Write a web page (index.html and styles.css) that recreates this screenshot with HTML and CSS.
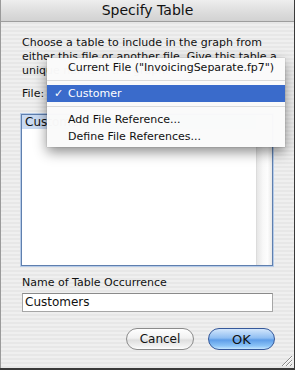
FILE: index.html
```html
<!DOCTYPE html>
<html lang="en">
<head>
  <meta charset="UTF-8">
  <title>Specify Table</title>
  <link rel="stylesheet" href="styles.css">
</head>
<body>
  <div class="window">
    <div class="titlebar">Specify Table</div>
    <div class="content">
      <p class="intro">Choose a table to include in the graph from<br>either this file or another file. Give this table a<br>unique name in the graph.</p>
      <div class="file-row">
        <span class="file-label">File:</span>
        <div class="popup"></div>
      </div>
      <div class="list">
        <div class="list-rows">
          <div class="row selected">Customers</div>
        </div>
        <div class="scroll-track"></div>
      </div>
      <div class="field-label">Name of Table Occurrence</div>
      <div class="field">Customers</div>
      <div class="buttons">
        <button class="btn cancel">Cancel</button>
        <button class="btn ok">OK</button>
      </div>
      <div class="grip-row">
        <svg class="grip" width="14" height="14" viewBox="0 0 14 14">
          <path d="M13 3 L3 13 M13 7 L7 13 M13 11 L11 13" stroke="#8c8c8c" stroke-width="1"/>
          <path d="M13 4 L4 13 M13 8 L8 13" stroke="#ffffff" stroke-width="1"/>
        </svg>
      </div>
    </div>

    <!-- open popup menu for the File: popup -->
    <div class="menu">
      <div class="item">Current File ("InvoicingSeparate.fp7")</div>
      <div class="sep"></div>
      <div class="item active"><span class="check">✓</span>Customer</div>
      <div class="sep"></div>
      <div class="item">Add File Reference...</div>
      <div class="item">Define File References...</div>
    </div>
  </div>
</body>
</html>
```

FILE: styles.css
```css
body {
  margin: 0;
  background: #3a3a3a;
  font-family: "DejaVu Sans", sans-serif;
  font-size: 11px;
  color: #111;
}

.window {
  position: relative;
  width: 293px;
  height: 368px;
  border-left: 1px solid #9a9a9a;
  background-color: #ededed;
  background-image: repeating-linear-gradient(to bottom, #efefef 0, #efefef 2px, #e7e7e7 2px, #e7e7e7 4px);
}

.titlebar {
  height: 21px;
  line-height: 21px;
  text-align: center;
  font-size: 14px;
  color: #111;
  background: linear-gradient(to bottom, #eeeeee, #dcdcdc 60%, #d2d2d2);
  border-bottom: 1px solid #9e9e9e;
}

.content {
  padding: 14px 21px 0 21px;
  display: flex;
  flex-direction: column;
}

.intro {
  margin: 0;
  line-height: 14px;
  white-space: nowrap;
}

.file-row {
  margin-top: 5px;
  height: 20px;
  display: flex;
  align-items: center;
}

.file-label {
  width: 26px;
}

.popup {
  width: 200px;
  height: 18px;
  background: #f4f4f4;
  border: 1px solid #999;
  border-radius: 4px;
}

.list {
  margin: 11px 0 0 -1px;
  height: 150px;
  width: 250px;
  display: flex;
  border: 1px solid #5f7fae;
  box-shadow: 0 0 0 1px #b6cbe8;
  background: #fff;
}

.list-rows {
  flex: 1;
}

.row {
  height: 14px;
  line-height: 14px;
  padding-left: 3px;
  font-size: 12px;
}

.row.selected {
  background: #c9daf2;
}

.scroll-track {
  width: 15px;
  background: linear-gradient(to right, #e6e6e6, #f8f8f8 40%, #fdfdfd 70%, #e9e9e9);
  border-left: 1px solid #dcdcdc;
}

.field-label {
  margin-top: 10px;
  line-height: 14px;
}

.field {
  margin-top: 3px;
  height: 17px;
  width: 247px;
  line-height: 17px;
  padding-left: 2px;
  font-size: 12px;
  background: #fff;
  border: 1px solid #a6a6a6;
  border-top-color: #8a8a8a;
}

.buttons {
  margin-top: 16px;
  margin-right: -2px;
  display: flex;
  justify-content: flex-end;
  gap: 14px;
}

.btn {
  height: 22px;
  border-radius: 11px;
  font-family: "DejaVu Sans", sans-serif;
  font-size: 12px;
  color: #111;
  padding: 0;
  cursor: pointer;
}

.cancel {
  width: 68px;
  border: 1px solid #8b8b8b;
  background: linear-gradient(to bottom, #ffffff, #f1f1f1 45%, #dedede 55%, #f4f4f4 90%, #ffffff);
}

.ok {
  width: 67px;
  font-size: 13px;
  border: 1px solid #35589a;
  background: linear-gradient(to bottom, #d3e6fc, #8fbef2 45%, #5e9de8 55%, #8cc4f7 85%, #c5e6ff);
}

.grip-row {
  margin: 3px -21px 0 0;
  display: flex;
  justify-content: flex-end;
}

.grip {
  display: block;
  margin-right: 1px;
}

.menu {
  position: absolute;
  left: 46px;
  top: 58px;
  width: 238px;
  padding: 1px 0 2px;
  background: rgba(250, 250, 250, 0.98);
  box-shadow: 0 5px 12px rgba(0, 0, 0, 0.45), 0 0 1px rgba(0, 0, 0, 0.3);
  font-size: 11px;
}

.item {
  position: relative;
  height: 17px;
  line-height: 17px;
  padding-left: 21px;
  white-space: nowrap;
}

.item.active {
  background: #3a6bcb;
  color: #fff;
}

.check {
  position: absolute;
  left: 7px;
}

.sep {
  height: 9px;
  background: linear-gradient(#dadada, #dadada) center / 100% 1px no-repeat;
}
```
